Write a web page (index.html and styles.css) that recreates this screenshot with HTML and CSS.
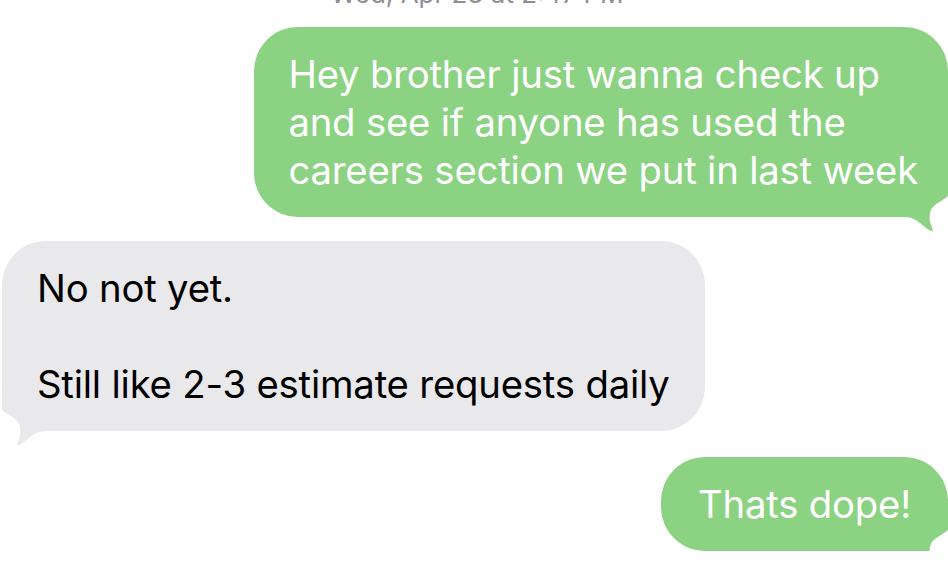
FILE: index.html
```html
<!DOCTYPE html>
<html lang="en">
<head>
    <meta charset="UTF-8">
    <meta name="viewport" content="width=device-width, initial-scale=1.0">
    <title>Messages</title>
    <link rel="stylesheet" href="styles.css">
</head>
<body>
    <div class="thread">
        <div class="stamp">Wed, Apr 23 at 2:47 PM</div>

        <div class="row sent">
            <div class="bubble green">
                Hey brother just wanna check up<br>
                and see if anyone has used the<br>
                careers section we put in last week
                <svg class="tail" viewBox="0 0 56 72"><path d="M0 0 L56 0 L56 31 C52 35 44 38 40 43 C37 47 37 55 39 60 C40 63 42 66 40 66 C37 66 33 62 28 58 C24 55 20 52 12 52 L0 52 Z"/></svg>
            </div>
        </div>

        <div class="row received">
            <div class="bubble grey">
                No not yet.<br>
                <br>
                Still like 2-3 estimate requests daily
                <svg class="tail" viewBox="0 0 56 72"><path d="M0 0 L56 0 L56 31 C52 35 44 38 40 43 C37 47 37 55 39 60 C40 63 42 66 40 66 C37 66 33 62 28 58 C24 55 20 52 12 52 L0 52 Z"/></svg>
            </div>
        </div>

        <div class="row sent">
            <div class="bubble green short">
                Thats dope!
                <svg class="tail" viewBox="0 0 56 72"><path d="M0 0 L56 0 L56 31 C52 35 44 38 40 43 C37 47 37 55 39 60 C40 63 42 66 40 66 C37 66 33 62 28 58 C24 55 20 52 12 52 L0 52 Z"/></svg>
            </div>
        </div>
    </div>
</body>
</html>
```

FILE: styles.css
```css
* {
    box-sizing: border-box;
}

body {
    margin: 0;
    background: #fff;
    font-family: Inter, "Liberation Sans", sans-serif;
    overflow: hidden;
}

.thread {
    display: flex;
    flex-direction: column;
}

/* only the lower part of the date line is left on screen */
.stamp {
    margin-top: -21px;
    font-size: 26px;
    line-height: 30px;
    color: #8e8e93;
    text-align: center;
    padding-left: 6px;
}

.row {
    display: flex;
}

.row.sent {
    justify-content: flex-end;
    margin-top: 18px;
}

.row.received {
    justify-content: flex-start;
    padding-left: 2px;
    margin-top: 24px;
}

.row.received + .row.sent {
    margin-top: 26px;
}

.bubble {
    position: relative;
    font-size: 38.3px;
    line-height: 48px;
    letter-spacing: -0.2px;
    padding: 23px 30px 23px 34px;
    border-radius: 44px;
    white-space: nowrap;
}

.green {
    background: #8bd382;
    color: #fff;
}

.grey {
    background: #e9e9eb;
    color: #000;
    padding-left: 35px;
    padding-right: 35px;
}

.short {
    padding-left: 37px;
    padding-right: 37px;
}

/* tail sits under the bubble so it never covers the text */
.tail {
    position: absolute;
    z-index: -1;
    bottom: -20px;
    right: 0;
    width: 56px;
    height: 72px;
}

.grey .tail {
    right: auto;
    left: 0;
    transform: scaleX(-1);
}

.green .tail path {
    fill: #8bd382;
}

.grey .tail path {
    fill: #e9e9eb;
}
```
